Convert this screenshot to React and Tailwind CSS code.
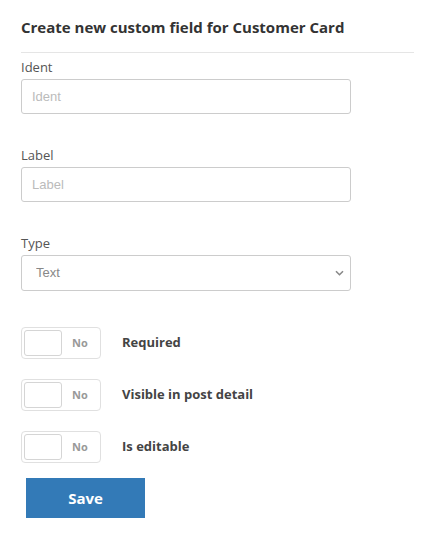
import { useState } from 'react';

const fields = [
  { id: 'ident', label: 'Ident' },
  { id: 'label', label: 'Label' },
];

const toggles = [
  { id: 'required', label: 'Required' },
  { id: 'visible', label: 'Visible in post detail' },
  { id: 'editable', label: 'Is editable' },
];

export default function App() {
  const [values, setValues] = useState({ ident: '', label: '', type: 'text' });
  const [flags, setFlags] = useState({ required: false, visible: false, editable: false });

  const set = (k, v) => setValues((p) => ({ ...p, [k]: v }));

  return (
    <div className="min-h-[545px] bg-white pl-[21px] pr-[12px] pt-[17px] font-['Open_Sans',sans-serif]">
      {/* Heading */}
      <h1 className="border-b border-[#e5e5e5] pb-[15px] text-[15px] font-bold leading-[20px] text-[#333]">
        Create new custom field for Customer Card
      </h1>

      <form className="mt-[4px] w-[330px]" onSubmit={(e) => e.preventDefault()}>
        {fields.map((f) => (
          <div key={f.id} className="mb-[31px]">
            <label htmlFor={f.id} className="mb-[3px] block pt-[1px] text-[13px] leading-[18px] text-[#555]">
              {f.label}
            </label>
            <input
              id={f.id}
              value={values[f.id]}
              onChange={(e) => set(f.id, e.target.value)}
              placeholder={f.label}
              className="block h-[35px] w-full rounded-[3px] border border-[#ccc] bg-white px-[10px] font-['Liberation_Sans',Arial,sans-serif] text-[13px] text-[#555] placeholder:text-[#bbb] focus:outline-none"
            />
          </div>
        ))}

        <div className="mb-[36px]">
          <label htmlFor="type" className="mb-[3px] block pt-[1px] text-[13px] leading-[18px] text-[#555]">
            Type
          </label>
          <div className="relative">
            <select
              id="type"
              value={values.type}
              onChange={(e) => set('type', e.target.value)}
              className="block h-[36px] w-full appearance-none rounded-[3px] border border-[#ccc] bg-white pl-[14px] font-['Liberation_Sans',Arial,sans-serif] text-[13px] text-[#888] focus:outline-none"
            >
              <option value="text">Text</option>
              <option value="number">Number</option>
              <option value="date">Date</option>
            </select>
            <svg
              className="pointer-events-none absolute right-[7px] top-1/2 h-[6px] w-[9px] -translate-y-1/2"
              viewBox="0 0 9 6"
              fill="none"
            >
              <path d="M1 1.2l3.5 3.5L8 1.2" stroke="#888" strokeWidth="1.6" />
            </svg>
          </div>
        </div>

        <div className="flex flex-col gap-[20px]">
          {toggles.map((t) => (
            <div key={t.id} className="flex items-center">
              <button
                type="button"
                onClick={() => setFlags((p) => ({ ...p, [t.id]: !p[t.id] }))}
                className="flex h-[32px] w-[80px] items-center rounded-[4px] border border-[#e0e0e0] bg-white pl-[2px]"
              >
                <span className="h-[26px] w-[38px] rounded-[3px] border border-[#d5d5d5] bg-white" />
                <span className="flex-1 pr-[2px] text-center text-[11px] font-bold text-[#999]">
                  {flags[t.id] ? 'Yes' : 'No'}
                </span>
              </button>
              <span className="ml-[21px] text-[13px] font-bold text-[#444]">{t.label}</span>
            </div>
          ))}
        </div>

        <button
          type="submit"
          className="ml-[5px] mt-[15px] h-[40px] w-[119px] bg-[#337ab7] text-[15px] font-bold text-white"
        >
          Save
        </button>
      </form>
    </div>
  );
}
